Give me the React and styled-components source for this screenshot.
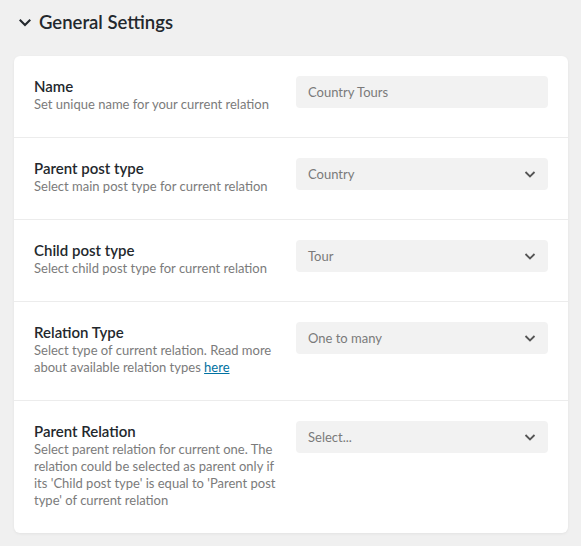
import styled, { createGlobalStyle } from 'styled-components';

const GlobalStyle = createGlobalStyle`
  html, body {
    margin: 0;
    padding: 0;
    background: #f0f0f0;
  }
  body {
    font-family: 'Segoe UI', Lato, 'Noto Sans', sans-serif;
    color: #23282d;
  }
`;

const Page = styled.div`
  padding: 0 13px 14px 14px;
`;

const Header = styled.div`
  display: flex;
  align-items: center;
  gap: 7px;
  height: 56px;
  padding-left: 4px;
  box-sizing: border-box;
  padding-bottom: 12px;
`;

const SectionTitle = styled.h2`
  margin: 0;
  font-size: 18.5px;
  font-weight: 600;
  color: #23282d;
`;

const Card = styled.section`
  background: #fff;
  border-radius: 6px;
  box-shadow: 0 1px 3px rgba(0, 0, 0, 0.06);
`;

const Row = styled.div`
  display: flex;
  gap: 20px;
  padding: 20px 20px 24px;
  border-bottom: 1px solid #ececec;

  &:last-child {
    border-bottom: none;
  }
`;

const Label = styled.div`
  flex: 0 0 242px;
`;

const LabelTitle = styled.div`
  font-size: 15px;
  line-height: 20px;
  font-weight: 600;
  color: #23282d;
`;

const LabelText = styled.div`
  font-size: 13px;
  line-height: 17px;
  color: #7b7b7b;

  a {
    color: #0071a1;
    text-decoration: underline;
  }
`;

const Control = styled.div`
  flex: 1;
  height: 32px;
  background: #f2f2f2;
  border-radius: 4px;
  display: flex;
  align-items: center;
  padding: 0 12px;
  font-size: 13px;
  color: #7a7a7a;
`;

const Caret = styled.svg`
  margin-left: auto;
  width: 12px;
  height: 12px;
  color: #555;
`;

const HeaderCaret = styled.svg`
  width: 14px;
  height: 14px;
  color: #23282d;
`;

const Chevron = ({ as: Comp = Caret }) => (
  <Comp viewBox="0 0 12 12" fill="none">
    <path d="M1.5 4l4.5 4.5L10.5 4" stroke="currentColor" strokeWidth="1.8" />
  </Comp>
);

export default function App() {
  const rows = [
    {
      title: 'Name',
      text: 'Set unique name for your current relation',
      value: 'Country Tours',
      select: false,
    },
    {
      title: 'Parent post type',
      text: 'Select main post type for current relation',
      value: 'Country',
      select: true,
    },
    {
      title: 'Child post type',
      text: 'Select child post type for current relation',
      value: 'Tour',
      select: true,
    },
    {
      title: 'Relation Type',
      text: (
        <>
          Select type of current relation. Read more about available relation types{' '}
          <a href="#">here</a>
        </>
      ),
      value: 'One to many',
      select: true,
    },
    {
      title: 'Parent Relation',
      text: "Select parent relation for current one. The relation could be selected as parent only if its 'Child post type' is equal to 'Parent post type' of current relation",
      value: 'Select...',
      select: true,
    },
  ];

  return (
    <>
      <GlobalStyle />
      <Page>
        <Header>
          <Chevron as={HeaderCaret} />
          <SectionTitle>General Settings</SectionTitle>
        </Header>
        <Card>
          {rows.map((row, index) => (
            <Row key={index}>
              <Label>
                <LabelTitle>{row.title}</LabelTitle>
                <LabelText>{row.text}</LabelText>
              </Label>
              <Control>
                {row.value}
                {row.select && <Chevron />}
              </Control>
            </Row>
          ))}
        </Card>
      </Page>
    </>
  );
}
